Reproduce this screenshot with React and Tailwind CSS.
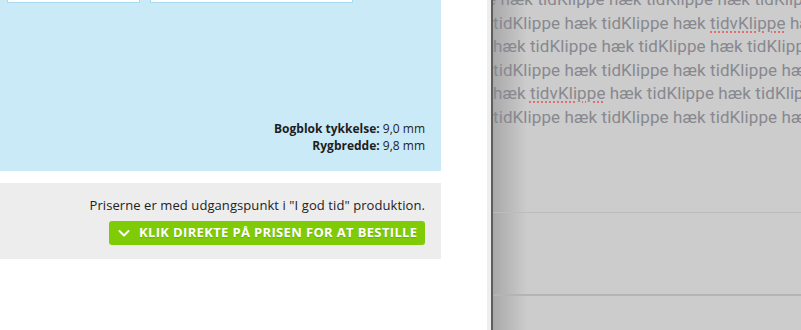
import React from "react";

const Word = ({ children, err }) =>
  err ? (
    <span className="underline decoration-dotted decoration-[#e06060] underline-offset-[3px]">{children}</span>
  ) : (
    <>{children}</>
  );

export default function App() {
  const lines = [
    [["e hæk tidKlippe hæk tidKlippe hæk tidKlippe hæk"]],
    [["tidKlippe hæk tidKlippe hæk "], ["tidvKlippe", true], [" hæk tidKlippe"]],
    [["hæk tidKlippe hæk tidKlippe hæk tidKlippe hæk"]],
    [["tidKlippe hæk tidKlippe hæk tidKlippe hæk tidKlippe"]],
    [["hæk "], ["tidvKlippe", true], [" hæk tidKlippe hæk tidKlippe"]],
    [["tidKlippe hæk tidKlippe hæk tidKlippe hæk tidKlippe"]],
  ];
  return (
    <div className="flex w-[801px] h-[330px] overflow-hidden bg-white">
      <div className="w-[441px] shrink-0 flex flex-col" style={{ fontFamily: "'Open Sans', sans-serif" }}>
        <div className="h-[171px] bg-[#cbeaf7] flex flex-col justify-between pb-[17px]">
          <div className="flex gap-[10px] pl-[7px]">
            <div className="w-[133px] h-[3px] bg-white border-x border-b border-[#a8dcf2]" />
            <div className="w-[203px] h-[3px] bg-white border-x border-b border-[#a8dcf2]" />
          </div>
          <div className="pr-[16px] text-right text-[12px] leading-[17px] text-[#1e1e1e]">
            <div><span className="font-bold">Bogblok tykkelse:</span> 9,0 mm</div>
            <div><span className="font-bold">Rygbredde:</span> 9,8 mm</div>
          </div>
        </div>
        <div className="mt-[12px] h-[76px] bg-[#ededed] flex flex-col items-end pr-[16px] pt-[13px]">
          <div className="text-[13px] leading-[18px] tracking-[0.08px] text-[#222]">Priserne er med udgangspunkt i "I god tid" produktion.</div>
          <div className="mt-[7px] h-[24px] w-[316px] rounded-[3px] bg-[#7fcb05] flex items-center pl-[8px] gap-[8px] text-white font-bold text-[13px] tracking-[0.35px] [text-shadow:0_1px_1px_rgba(0,0,0,0.15)]">
            <svg width="14" height="14" viewBox="0 0 14 14" fill="none">
              <path d="M2.5 5 L7 9.5 L11.5 5" stroke="white" strokeWidth="2" strokeLinecap="round" strokeLinejoin="round" />
            </svg>
            <span>KLIK DIREKTE PÅ PRISEN FOR AT BESTILLE</span>
          </div>
        </div>
      </div>
      <div className="w-[46px] shrink-0 bg-white" />
      <div className="w-[4px] shrink-0 bg-[#eeeeee]" />
      <div className="w-[2px] shrink-0 bg-[#5e5e5e]" />
      <div className="relative flex-1 bg-[#cccccc] flex flex-col overflow-hidden">
        <div className="absolute inset-y-0 left-0 w-[34px] bg-gradient-to-r from-[#a9a9a9] to-[#cccccc]" />
        <div className="relative h-[213px] border-b border-[#bcbcbc] pt-0" style={{ fontFamily: "Roboto, sans-serif" }}>
          <div className="-mt-[12px] text-[17px] leading-[23.5px] tracking-[0.1px] text-[#88888f] whitespace-nowrap">
            {lines.map((ln, i) => (
              <div key={i} className={i === 0 ? "-ml-[6px]" : ""}>
                {ln.map(([t, e], j) => (
                  <Word key={j} err={e}>{t}</Word>
                ))}
              </div>
            ))}
          </div>
        </div>
        <div className="relative h-[83px] border-b-2 border-[#b4b4b4]" />
        <div className="flex-1" />
      </div>
    </div>
  );
}
